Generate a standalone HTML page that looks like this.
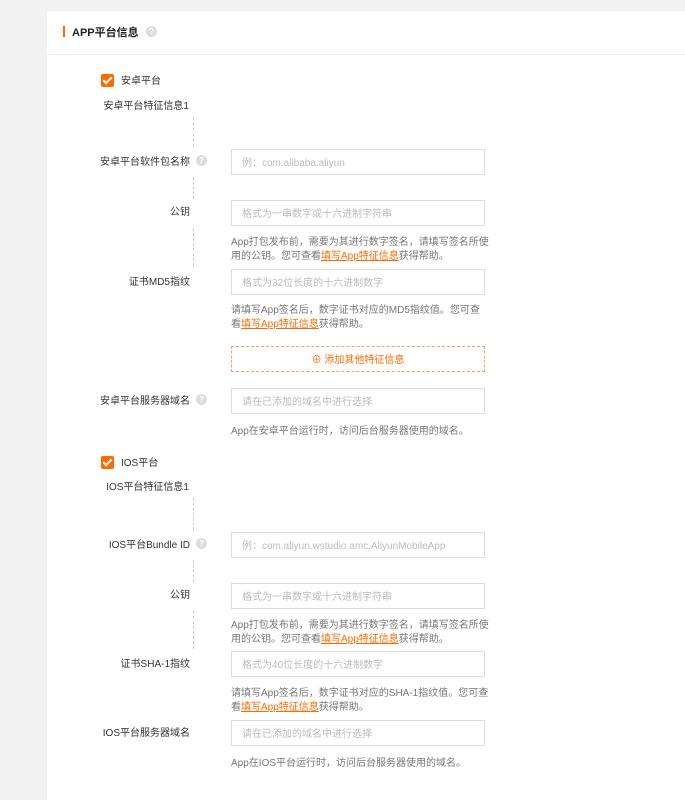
<!DOCTYPE html>
<html><head><meta charset="utf-8"><style>
*{margin:0;padding:0;box-sizing:border-box}
body{width:685px;height:800px;background:#f2f2f2;font-family:"Liberation Sans","Noto Sans CJK SC",sans-serif;font-size:10px;color:#333;position:relative;overflow:hidden}
.card{position:absolute;left:47px;top:11px;right:0;bottom:0;background:#fff}
.hd{position:absolute;left:47px;top:11px;right:0;height:44px;border-bottom:1px solid #eee}
.bar{position:absolute;left:63px;top:26px;width:2px;height:11px;background:#ff6a00}
.a,.lbl,.help{transform:translateY(2px)}
.a{position:absolute;white-space:nowrap;line-height:12px}
.lbl{position:absolute;right:495px;white-space:nowrap;line-height:12px;color:#333}
.q{position:absolute;width:11px;height:11px;border-radius:50%;background:#ddd;color:#fff;font-size:8px;line-height:11px;text-align:center;font-weight:bold}
.in{position:absolute;left:231px;width:254px;height:26px;border:1px solid #ddd;color:#bbb;padding-left:10px;padding-top:2px;line-height:24px;font-size:10px}
.help{position:absolute;left:231px;width:258px;color:#777;line-height:14px;font-size:10px}
.help u{color:#ff6a00}
.cb{position:absolute;left:101px;width:13px;height:13px;background:#ff6a00;border-radius:2px}
.cb:after{content:"";position:absolute;left:4px;top:1px;width:3px;height:7px;border:solid #fff;border-width:0 2px 2px 0;transform:rotate(45deg)}
.dl{position:absolute;left:193px;width:0;border-left:1px dashed #ccc}
.btn{position:absolute;left:231px;top:346px;width:254px;height:26px;border:1px dashed #f3a06a;color:#ff6a00;text-align:center;line-height:24px;padding-top:2px}
</style></head><body>
<div class="card"></div>
<div class="hd"></div>
<div class="bar"></div>
<div class="a" style="left:72px;top:25px;font-size:11px;font-weight:bold;color:#222">APP平台信息</div>
<div class="q" style="left:146px;top:26px">?</div>

<div class="cb" style="top:74px"></div>
<div class="a" style="left:121px;top:74px">安卓平台</div>
<div class="lbl" style="top:99px;right:496px">安卓平台特征信息1</div>
<div class="dl" style="top:117px;height:30px"></div>
<div class="lbl" style="top:155px;right:495px">安卓平台软件包名称</div>
<div class="q" style="left:196px;top:155px">?</div>
<div class="in" style="top:149px">例：com.alibaba.aliyun</div>
<div class="dl" style="top:177px;height:22px"></div>
<div class="lbl" style="top:205px">公钥</div>
<div class="in" style="top:200px">格式为一串数字或十六进制字符串</div>
<div class="dl" style="top:228px;height:38px"></div>
<div class="help" style="top:234px">App打包发布前，需要为其进行数字签名，请填写签名所使用的公钥。您可查看<u>填写App特征信息</u>获得帮助。</div>
<div class="lbl" style="top:275px">证书MD5指纹</div>
<div class="in" style="top:269px">格式为32位长度的十六进制数字</div>
<div class="help" style="top:302px">请填写App签名后，数字证书对应的MD5指纹值。您可查看<u>填写App特征信息</u>获得帮助。</div>
<div class="btn">⊕ 添加其他特征信息</div>
<div class="lbl" style="top:394px;right:495px">安卓平台服务器域名</div>
<div class="q" style="left:196px;top:394px">?</div>
<div class="in" style="top:388px">请在已添加的域名中进行选择</div>
<div class="help" style="top:423px">App在安卓平台运行时，访问后台服务器使用的域名。</div>

<div class="cb" style="top:456px"></div>
<div class="a" style="left:121px;top:456px">IOS平台</div>
<div class="lbl" style="top:480px;right:496px">IOS平台特征信息1</div>
<div class="dl" style="top:498px;height:32px"></div>
<div class="lbl" style="top:538px;right:495px">IOS平台Bundle ID</div>
<div class="q" style="left:196px;top:538px">?</div>
<div class="in" style="top:532px">例：com.aliyun.wstudio.amc.AliyunMobileApp</div>
<div class="dl" style="top:560px;height:22px"></div>
<div class="lbl" style="top:588px">公钥</div>
<div class="in" style="top:583px">格式为一串数字或十六进制字符串</div>
<div class="dl" style="top:611px;height:38px"></div>
<div class="help" style="top:617px">App打包发布前，需要为其进行数字签名，请填写签名所使用的公钥。您可查看<u>填写App特征信息</u>获得帮助。</div>
<div class="lbl" style="top:657px">证书SHA-1指纹</div>
<div class="in" style="top:651px">格式为40位长度的十六进制数字</div>
<div class="help" style="top:685px">请填写App签名后，数字证书对应的SHA-1指纹值。您可查看<u>填写App特征信息</u>获得帮助。</div>
<div class="lbl" style="top:726px">IOS平台服务器域名</div>
<div class="in" style="top:720px">请在已添加的域名中进行选择</div>
<div class="help" style="top:755px">App在IOS平台运行时，访问后台服务器使用的域名。</div>
</body></html>
